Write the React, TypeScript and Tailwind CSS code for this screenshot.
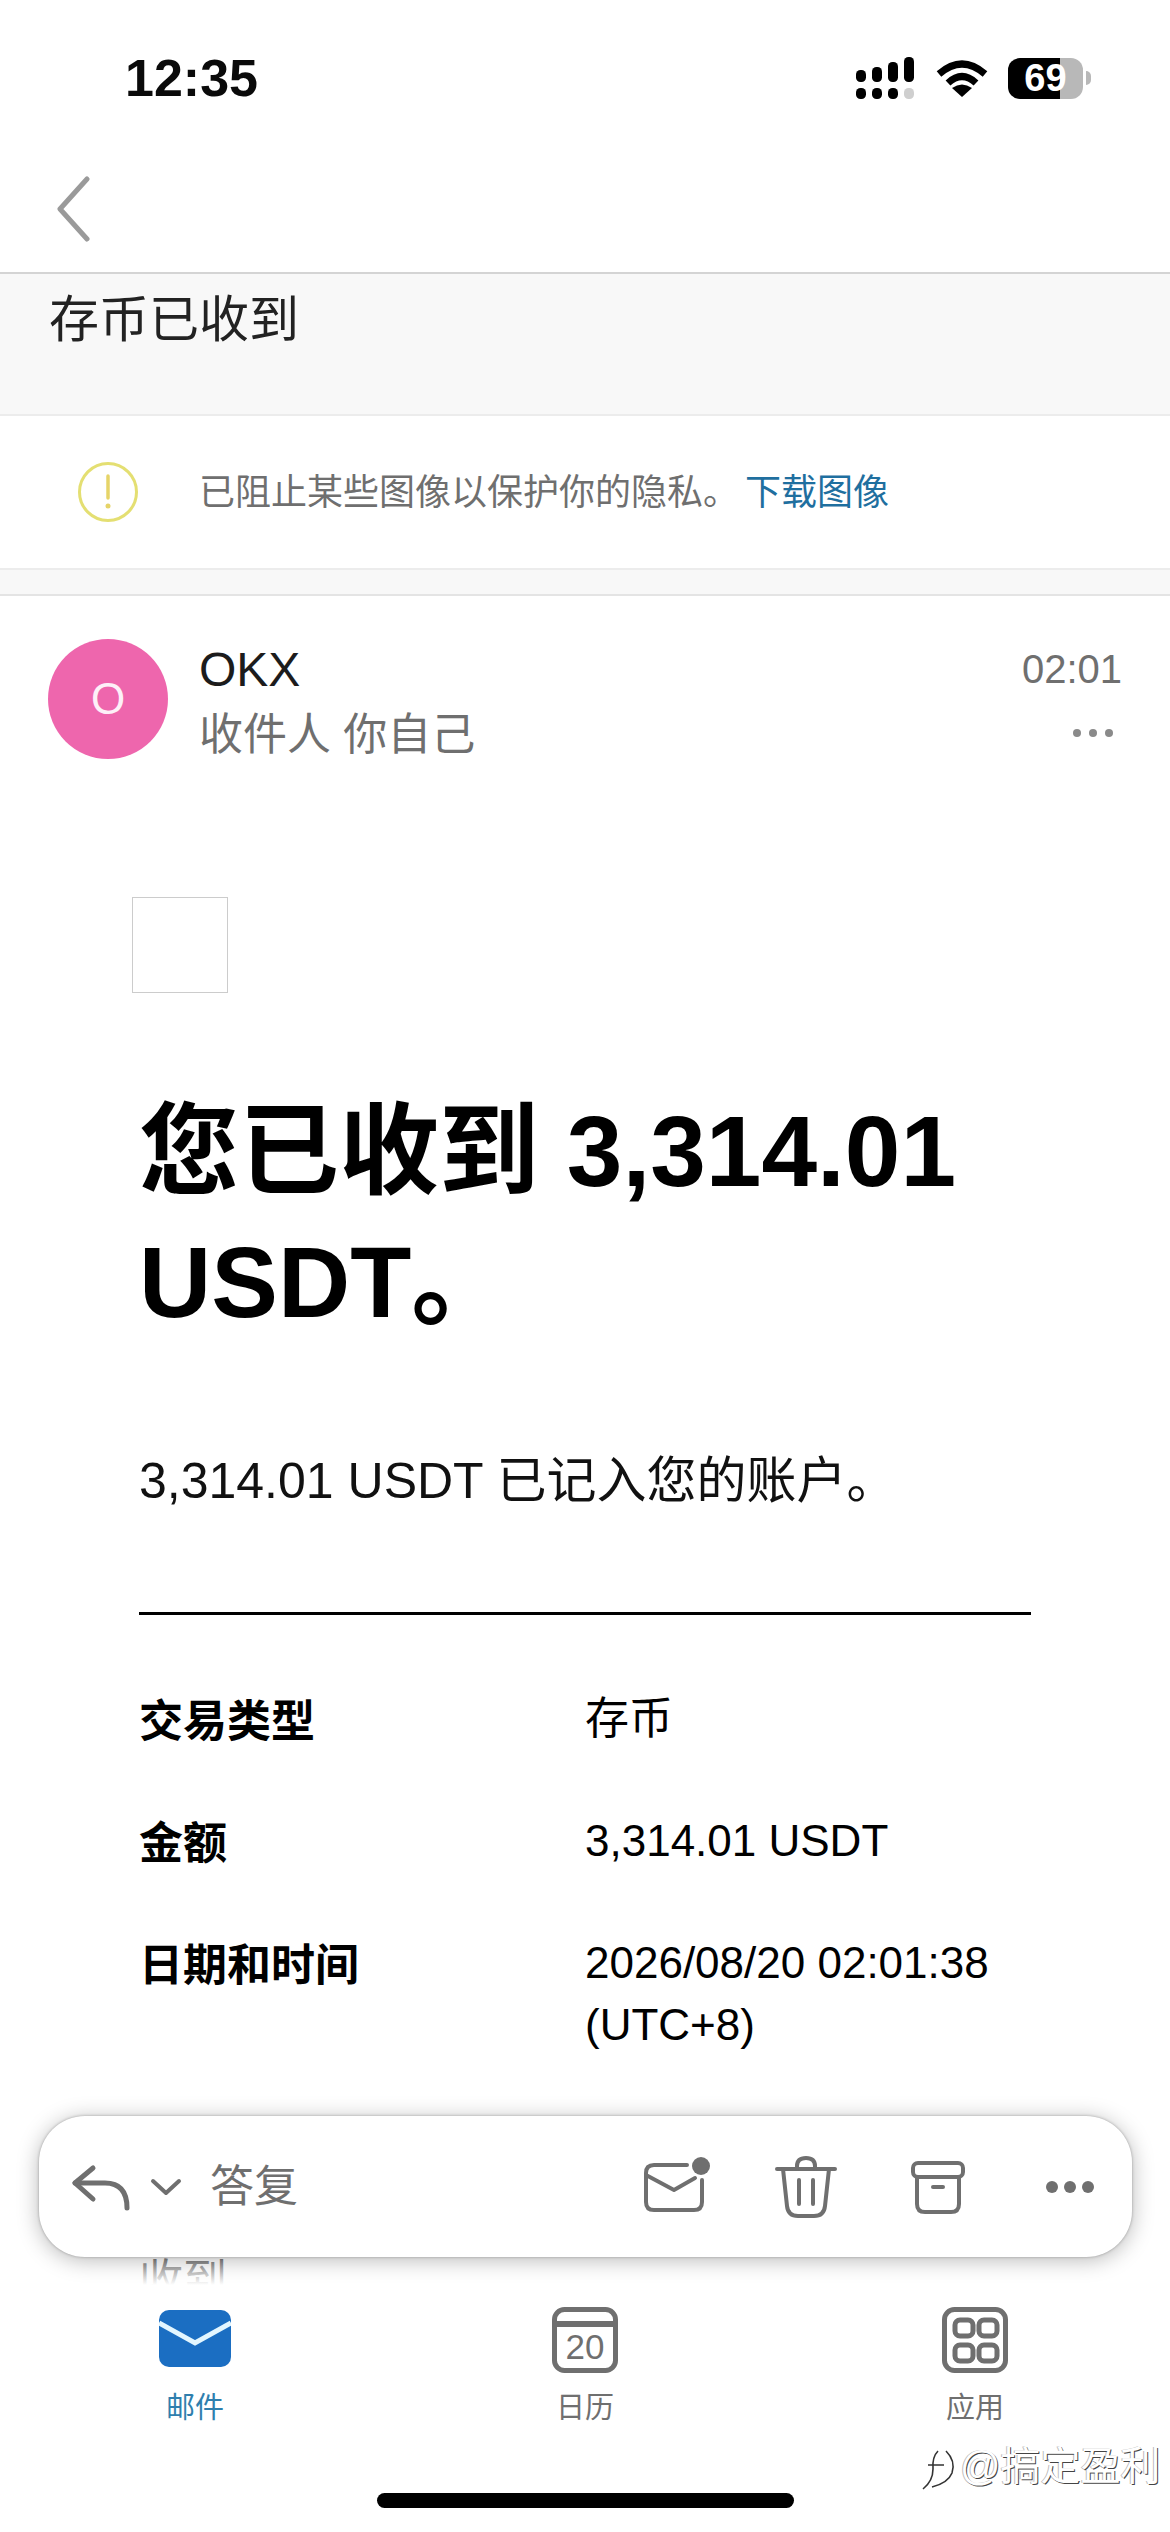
export default function App() {
  const gray = "#6f6f6f";
  return (
    <div className="relative flex h-[2532px] w-[1170px] flex-col overflow-hidden bg-white font-['Liberation_Sans','Noto_Sans_CJK_SC',sans-serif] text-black">
      <header className="shrink-0 border-b-2 border-[#d4d4d4]">
        <div className="flex h-[156px] items-center justify-between pl-[125px] pr-[79px]">
          <span className="text-[52px] leading-none font-bold text-[#0a0a0a]">12:35</span>
          <div className="flex items-center">
            <svg width="60" height="44" viewBox="0 0 60 44" fill="#000" className="mr-[21px]">
              <rect x="1" y="14" width="10" height="12" rx="4.5" />
              <rect x="17" y="11" width="10" height="15" rx="4.5" />
              <rect x="33" y="6" width="10" height="20" rx="4.5" />
              <rect x="49" y="1" width="10" height="25" rx="4.5" />
              <rect x="1" y="32" width="10" height="11" rx="4.5" />
              <rect x="17" y="32" width="10" height="11" rx="4.5" />
              <rect x="33" y="32" width="10" height="11" rx="4.5" />
              <rect x="49" y="32" width="10" height="11" rx="4.5" fill="#cfcfcf" />
            </svg>
            <svg width="52" height="40" viewBox="0 0 52 40" fill="none" stroke="#000" strokeWidth="7" className="mr-[20px]">
              <path d="M3 16 Q26 -4 49 16" />
              <path d="M12 25 Q26 12 40 25" />
              <path d="M26 39 L16 30 Q26 23 36 30 Z" fill="#000" stroke="none" />
            </svg>
            <div className="flex h-[41px] w-[75px] items-center justify-center rounded-[12px] bg-[linear-gradient(90deg,#000_70%,#b8b8b8_70%)] text-[38px] leading-none font-bold text-white">
              69
            </div>
            <div className="ml-[3px] h-[14px] w-[5px] rounded-r-full bg-[#b8b8b8]" />
          </div>
        </div>
        <div className="flex h-[116px] items-start pl-[55px] pt-[20px]">
          <svg width="36" height="66" viewBox="0 0 36 66" fill="none" stroke="#9a9a9a" strokeWidth="5" strokeLinecap="round" strokeLinejoin="round">
            <path d="M32 3 L5 33 L32 63" />
          </svg>
        </div>
      </header>

      <div className="h-[140px] shrink-0 bg-[#f8f8f8] pl-[49px] pt-[11px] text-[50px] leading-[70px] text-[#222]">存币已收到</div>

      <div className="flex h-[156px] shrink-0 items-center border-y-2 border-[#ececec] pl-[78px]">
        <svg width="60" height="62" viewBox="0 0 60 62" fill="none">
          <circle cx="30" cy="31" r="28.5" stroke="#e4df72" strokeWidth="3" />
          <path d="M30 15 V37" stroke="#e6d468" strokeWidth="3.5" strokeLinecap="round" />
          <circle cx="30" cy="45" r="2.5" fill="#e6d468" />
        </svg>
        <span className="ml-[61px] mt-[2px] text-[36px] leading-[50px] text-[#6f6f6f]">已阻止某些图像以保护你的隐私。</span>
        <span className="ml-[6px] mt-[2px] text-[36px] leading-[50px] text-[#1f6f9f]">下载图像</span>
      </div>

      <div className="h-[26px] shrink-0 border-b-2 border-[#e4e4e4] bg-[#f8f8f8]" />

      <main className="min-h-0 flex-1 overflow-hidden">
        <div className="flex pl-[48px] pr-[48px] pt-[43px]">
          <div className="flex h-[120px] w-[120px] shrink-0 items-center justify-center rounded-full bg-[#ee66ad] text-[44px] leading-none text-[#fdf0f8]">O</div>
          <div className="-mt-[2px] ml-[31px] flex flex-1 flex-col">
            <div className="text-[48px] leading-[65px] text-[#1c1c1c]">OKX</div>
            <div className="text-[44px] leading-[65px] text-[#6f6f6f]">收件人 你自己</div>
          </div>
          <div className="-mt-[2px] flex flex-col items-end">
            <span className="text-[40px] leading-[65px] text-[#6f6f6f]">02:01</span>
            <svg width="42" height="10" viewBox="0 0 42 10" fill="#8a8a8a" className="mr-[8px] mt-[26px]">
              <circle cx="5" cy="5" r="4" />
              <circle cx="21" cy="5" r="4" />
              <circle cx="37" cy="5" r="4" />
            </svg>
          </div>
        </div>

        <div className="ml-[132px] mt-[130px] h-[96px] w-[96px] border border-[#cccccc]" />

        <div className="ml-[139px] w-[892px]">
          <h1 className="mt-[93px] text-[100px] leading-[131px] font-bold">
            您已收到 3,314.01
            <br />
            USDT。
          </h1>
          <p className="mt-[98px] text-[50px] leading-[70px] text-[#111]">3,314.01 USDT 已记入您的账户。</p>
          <div className="mt-[96px] h-[3px] bg-black" />
          <div className="mt-[73px] grid grid-cols-[446px_1fr] gap-y-[57px] text-[44px] leading-[62px]">
            <div className="pt-[3px] font-bold">交易类型</div>
            <div>存币</div>
            <div className="pt-[3px] font-bold">金额</div>
            <div>3,314.01 USDT</div>
            <div className="pt-[3px] font-bold">日期和时间</div>
            <div>
              2026/08/20 02:01:38
              <br />
              (UTC+8)
            </div>
          </div>
          <div className="mt-[194px] text-[44px] leading-[62px] text-[#555]">收到</div>
        </div>
      </main>

      <nav className="relative h-[247px] shrink-0 bg-white">
        <div className="absolute bottom-full left-0 h-[34px] w-full bg-gradient-to-t from-white to-transparent" />
        <div className="grid grid-cols-3 pt-[22px]">
          <div className="flex flex-col items-center">
            <svg width="72" height="66" viewBox="0 0 72 66">
              <rect x="0" y="3" width="72" height="57" rx="10" fill="#1b6ec2" />
              <path d="M0 16 L36 36 L72 16" fill="none" stroke="#e2f6ff" strokeWidth="5" />
            </svg>
            <span className="mt-[15px] text-[29px] leading-[40px] text-[#2f7fae]">邮件</span>
          </div>
          <div className="flex flex-col items-center">
            <svg width="66" height="66" viewBox="0 0 66 66" fill="none" stroke="#6f6f6f" strokeWidth="5">
              <rect x="2.5" y="2.5" width="61" height="61" rx="10" />
              <path d="M3 17 H63" strokeWidth="6" />
              <text x="33" y="52" textAnchor="middle" fontSize="35" fill="#6f6f6f" stroke="none">20</text>
            </svg>
            <span className="mt-[15px] text-[29px] leading-[40px] text-[#6f6f6f]">日历</span>
          </div>
          <div className="flex flex-col items-center">
            <svg width="66" height="66" viewBox="0 0 66 66" fill="none" stroke="#6f6f6f" strokeWidth="5">
              <rect x="2.5" y="2.5" width="61" height="61" rx="10" />
              <rect x="13" y="13" width="18" height="16" rx="5" />
              <rect x="37" y="13" width="18" height="16" rx="5" />
              <rect x="13" y="38" width="18" height="16" rx="5" />
              <rect x="37" y="38" width="18" height="16" rx="5" />
            </svg>
            <span className="mt-[15px] text-[29px] leading-[40px] text-[#6f6f6f]">应用</span>
          </div>
        </div>
        <div className="mx-auto mt-[65px] h-[15px] w-[417px] rounded-full bg-black" />
      </nav>

      <div className="absolute left-[39px] top-[2116px] z-10 flex h-[141px] w-[1093px] items-center rounded-[46px] bg-white pl-[31px] pr-[37px] shadow-[0_0_3px_rgba(0,0,0,0.3),0_3px_22px_rgba(0,0,0,0.28)]">
        <svg width="62" height="52" viewBox="0 0 62 52" fill="none" stroke={gray} strokeWidth="5" strokeLinecap="round" strokeLinejoin="round">
          <path d="M23 7 L5 22 L23 38" />
          <path d="M5 22 H35 Q57 22 57 47" />
        </svg>
        <svg width="32" height="18" viewBox="0 0 32 18" fill="none" stroke={gray} strokeWidth="4" strokeLinecap="round" strokeLinejoin="round" className="ml-[18px]">
          <path d="M3 3 L16 15 L29 3" />
        </svg>
        <span className="ml-[28px] text-[44px] leading-none text-[#6f6f6f]">答复</span>
        <div className="ml-auto flex items-center">
          <svg width="72" height="64" viewBox="0 0 72 64" fill="none" stroke={gray} strokeWidth="4" strokeLinecap="round" strokeLinejoin="round">
            <path d="M45 10 H12 Q4 10 4 18 V47 Q4 55 12 55 H52 Q60 55 60 47 V25" />
            <path d="M4 20 L32 35 L53 23" />
            <circle cx="59" cy="11" r="9" fill={gray} stroke="none" />
          </svg>
          <svg width="68" height="72" viewBox="0 0 68 72" fill="none" stroke={gray} strokeWidth="4" strokeLinecap="round" strokeLinejoin="round" className="ml-[58px]">
            <path d="M5 18 H63" />
            <path d="M25 18 V15 Q25 7 34 7 Q43 7 43 15 V18" />
            <path d="M11 18 L15 55 Q16 65 26 65 H42 Q52 65 53 55 L57 18" />
            <path d="M27 29 V53 M41 29 V53" />
          </svg>
          <svg width="62" height="62" viewBox="0 0 62 62" fill="none" stroke={gray} strokeWidth="4" strokeLinecap="round" strokeLinejoin="round" className="ml-[67px]">
            <rect x="6" y="7" width="50" height="14" rx="5" />
            <path d="M10 21 V48 Q10 56 18 56 H44 Q52 56 52 48 V21" />
            <path d="M26 31 H36" />
          </svg>
          <svg width="50" height="14" viewBox="0 0 50 14" fill={gray} className="ml-[76px]">
            <circle cx="7" cy="7" r="6" />
            <circle cx="25" cy="7" r="6" />
            <circle cx="43" cy="7" r="6" />
          </svg>
        </div>
      </div>

      <div className="absolute left-[920px] top-[2443px] z-10 flex items-start">
        <svg width="40" height="50" viewBox="0 0 40 50" fill="none" stroke="#333" strokeWidth="1.6">
          <path d="M8 22 H24 M18 8 Q12 14 13 26 Q13 38 3 46" />
          <path d="M26 8 Q36 18 32 30 Q28 40 12 44" />
        </svg>
        <span className="text-[40px] leading-[46px] text-white [text-shadow:1px_1px_0_#444,-1px_0_0_#bbb]">@搞定盈利</span>
      </div>
    </div>
  );
}
